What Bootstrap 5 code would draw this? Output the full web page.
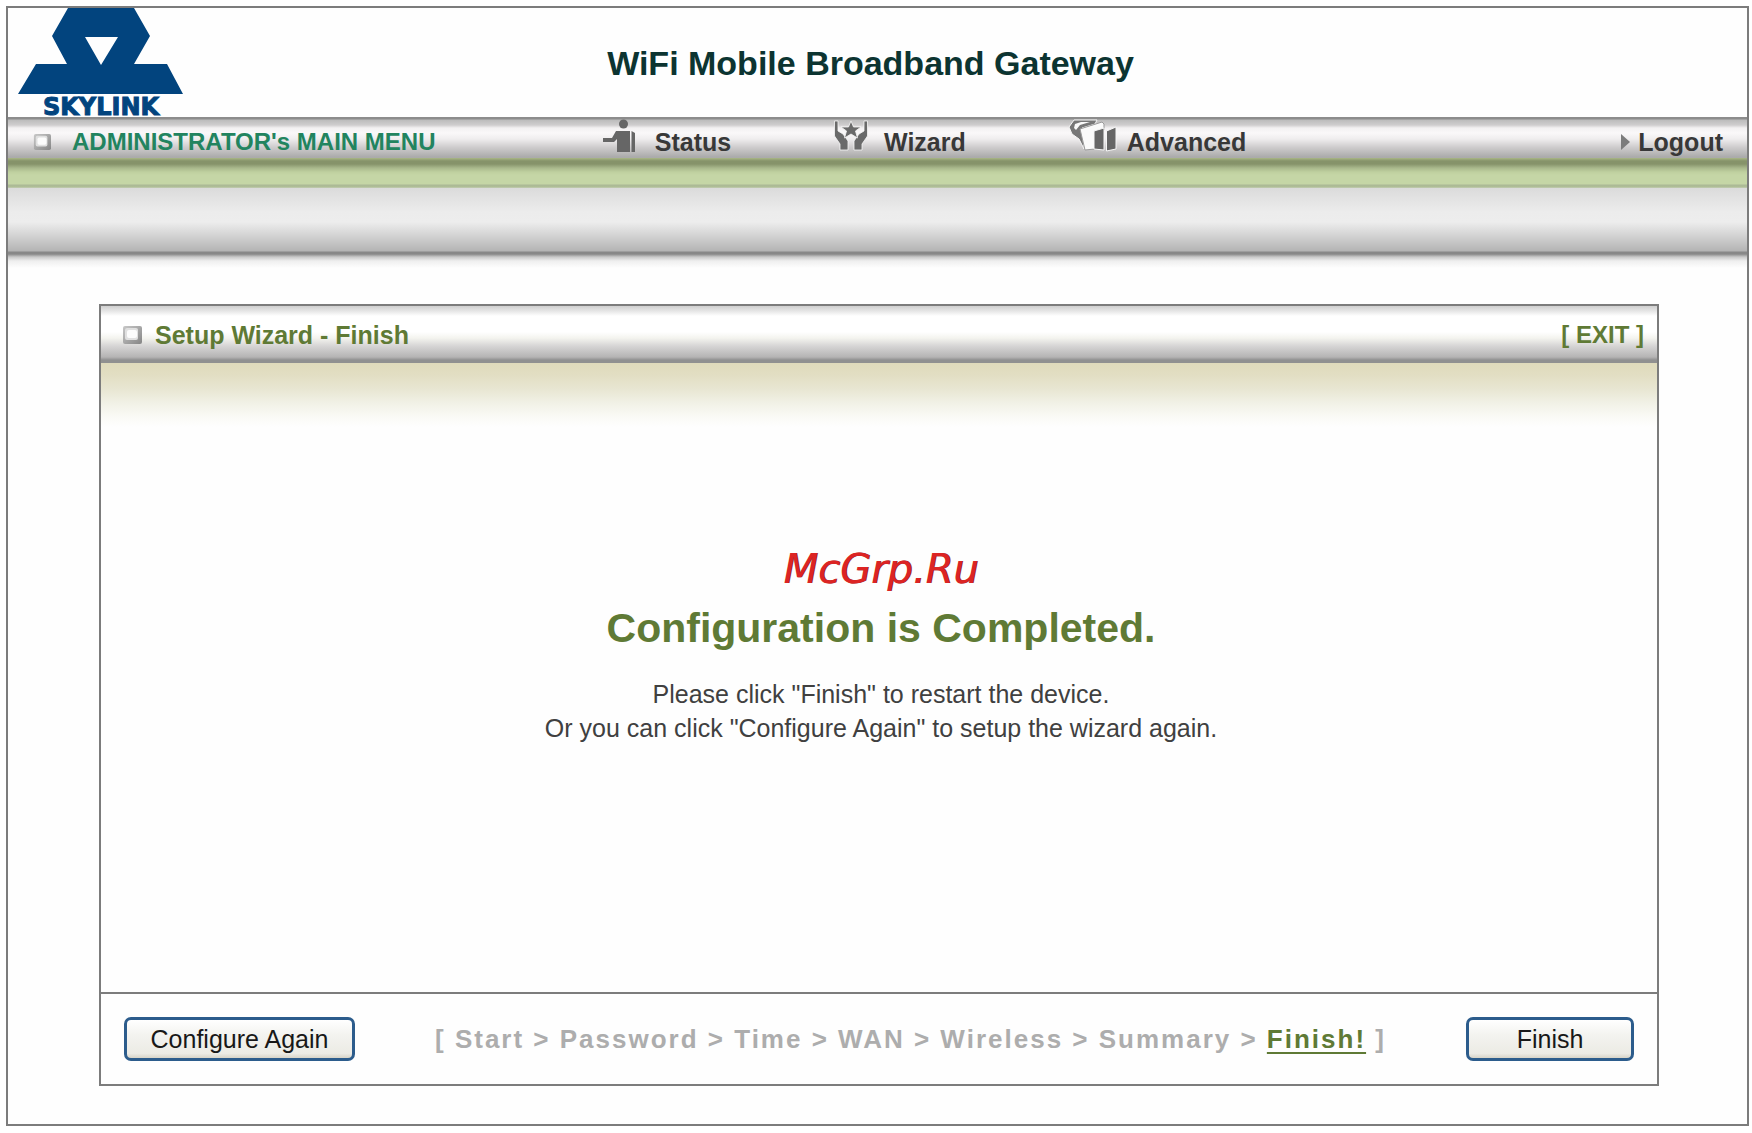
<!DOCTYPE html>
<html lang="en">
<head>
<meta charset="utf-8">
<meta name="viewport" content="width=device-width, initial-scale=1">
<title>WiFi Mobile Broadband Gateway</title>
<link href="https://cdn.jsdelivr.net/npm/bootstrap@5.3.0/dist/css/bootstrap.min.css" rel="stylesheet">
<style>
  :root { --line: #7c7c7c; --olive: #5f7a35; }
  body { font-family: "Liberation Sans", Arial, sans-serif; font-size: 25px; line-height: 34px; color: #404040; background: #fff; padding: 6px 3px 7px 6px; }
  a { text-decoration: none; color: inherit; }
  .frame { border: 2px solid var(--line); min-height: calc(100vh - 13px); background: #fefefe; }
  .masthead { height: 109px; }
  .masthead .side { flex: 1 1 0; }
  .masthead h1 { font-size: 34px; line-height: 40px; color: #0c3431; padding-right: 14px; }
  .wordmark { font: bold 24px "DejaVu Sans", sans-serif; }
  .menu-bar {
    display: grid; grid-template-columns: 342fr 133fr 135fr 390fr; align-items: center;
    height: 41px; padding-top: 2px; font-weight: bold; color: #383838;
    background: linear-gradient(#8c8c8c 0, #8c8c8c 2px, #bcbcbc 3px, #cfcdce 8px, #f3f1f2 11px, #faf8f9 16px, #efedee 22px, #cfcdce 30px, #ababab 40px);
  }
  .menu-title { color: #22845f; font-size: 24px; padding-left: 24px; }
  .menu-title svg { margin-right: 20px; }
  .menu-icon { margin-bottom: 12px; }
  .stripe-green { height: 30px; background: linear-gradient(#a9b786 0, #86936a 3px, #86936a 6px, #a9b88c 10px, #bfd09f 14px, #c5d6a6 17px, #c5d6a6 26px, #abb896 27px, #b0bf97 29px, #c8cfbc 30px); }
  .stripe-gray { height: 80px; background: linear-gradient(#dbdbdb 0, #ececec 24px, #ededed 34px, #d6d6d6 46px, #b4b4b4 63px, #888 64px, #888 66px, #c9c9c9 69px, #efefef 73px, #fefefe 80px); }
  .panel { border: 2px solid var(--line); margin: 36px 88px 38px 91px; }
  .panel-head {
    height: 57px; padding: 0 13px 0 21px; color: var(--olive); font-weight: bold;
    background: linear-gradient(#cfcfcf 0, #e6e6e6 5px, #fff 10px, #fff 26px, #f4f4ef 32px, #d6d5d5 40px, #b5b4b4 51px, #909090 54px, #909090 57px);
  }
  .panel-head h2 { font-size: 25px; line-height: 34px; }
  .panel-head svg { margin-right: 13px; }
  .exit-link { font-size: 24px; }
  .panel-main { padding: 0 0 66px 4px; background: linear-gradient(#dfdabb 0, #e2dec3 12px, #e8e6d2 26px, #f1f1e6 40px, #fafaf6 54px, #fefefe 64px); }
  .brand-note { font: italic 40px/48px "DejaVu Sans", sans-serif; color: #dc2424; text-shadow: 1px 0 0 #8c1c1c; }
  .done { font-size: 41px; line-height: 50px; margin: 10px 0 24px; color: var(--olive); }
  .panel-foot { height: 92px; padding: 0 23px; border-top: 2px solid var(--line); }
  .steps { font-size: 26px; letter-spacing: 2px; font-weight: bold; color: #adadad; }
  .steps a { color: var(--olive); text-decoration: underline; text-decoration-thickness: 2px; text-underline-offset: 4px; }
  .xp {
    height: 44px; padding: 0 22px; font-size: 25px; line-height: 34px; color: #181818;
    border: 3px solid #2c5c8c; border-radius: 7px;
    background: linear-gradient(#fff, #f3f3ef 40%, #ecebe5 88%, #d8d4c8);
  }
  .xp:hover { color: #000; border-color: #2c5c8c; }
  .xp-again { min-width: 231px; }
  .xp-finish { min-width: 168px; }
</style>
<script src="https://cdn.jsdelivr.net/npm/bootstrap@5.3.0/dist/js/bootstrap.bundle.min.js"></script>
</head>
<body>
<svg width="0" height="0" class="position-absolute" aria-hidden="true">
  <defs>
    <linearGradient id="bevel" x1="0" y1="0" x2="1" y2="1"><stop offset="0" stop-color="#c8c8c8"/><stop offset="1" stop-color="#858585"/></linearGradient>
    <symbol id="bullet" viewBox="0 0 20 20">
      <rect x="1" y="1" width="19" height="18" rx="2" fill="url(#bevel)"/>
      <rect x="3" y="3" width="13" height="12" rx="2" fill="#e0e0e0"/>
      <rect x="5" y="5" width="10" height="8" rx="2" fill="#fcfcfc"/>
    </symbol>
  </defs>
</svg>

<div class="frame d-flex flex-column">
  <header class="masthead d-flex align-items-center">
    <div class="side align-self-start">
      <svg class="d-block overflow-visible" width="190" height="109" viewBox="0 0 190 109" role="img" aria-label="Skylink">
        <path fill="#02447e" fill-rule="evenodd" d="M60 0H126L142 28L126 56H159L175 86H10L28 56H59L44 28ZM77 29L93 57L110 29Z"/>
        <text class="wordmark" x="93" y="107" text-anchor="middle" fill="#02447e" stroke="#02447e">SKYLINK</text>
      </svg>
    </div>
    <h1 class="fw-bold text-nowrap mb-0">WiFi Mobile Broadband Gateway</h1>
    <div class="side"></div>
  </header>

  <nav class="menu-bar text-nowrap">
    <div class="menu-title d-flex align-items-center"><svg width="20" height="18"><use href="#bullet"/></svg>ADMINISTRATOR's MAIN MENU</div>
    <a href="#" class="d-flex align-items-center">
      <svg class="menu-icon" width="32" height="34" viewBox="0 0 32 34"><g fill="#666"><circle cx="20.500" cy="5" r="4.500"/><path d="M0 19H9L13 12H27V33H14V20L11 23H0Z"/><path d="M28.500 12L32 14V33H28.500Z"/></g></svg>
      <span class="ps-3 ms-1">Status</span></a>
    <a href="#" class="d-flex align-items-center">
      <svg class="menu-icon" width="34" height="34" viewBox="0 0 34 34"><g fill="#6a6a6a" stroke="#f6f6f6" stroke-width=".8"><path d="M0.500 2H4V12L9 15L14 22V31H6V25L0.500 17Z"/><path d="M33.500 2H30V12L25 15L20 22V31H28V25L33.500 17Z"/><path d="M17 2L19.500 8H27L21.500 12L23.500 19L17 15L10.500 19L12.500 12L7 8H14.500Z"/></g></svg>
      <span class="ps-3">Wizard</span></a>
    <div class="d-flex align-items-center justify-content-between">
      <a href="#" class="d-flex align-items-center">
        <svg class="menu-icon" width="50" height="34" viewBox="0 0 50 34"><path fill="#777" stroke="#f6f6f6" d="M5 1H28L26 5L13 9L15 30L10 20L3 15L0 8Z"/><path fill="#fafafa" d="M6 5L12 3H21L11 6L7 11L5 9Z"/><path fill="#fafafa" stroke="#999" d="M11 10L33 3L35 5V11L26 12V30L16 31Z"/><path fill="#666" stroke="#f6f6f6" d="M25 12L35 9V31L25 30Z"/><path fill="#666" stroke="#f6f6f6" d="M37.500 12L47 8V30L37.500 32Z"/></svg>
        <span class="ps-2">Advanced</span></a>
      <a href="#" class="d-flex align-items-center pe-4">
        <svg width="9" height="16" viewBox="0 0 9 16"><path fill="#7c7c7c" d="M0 0L9 8L0 16Z"/></svg>
        <span class="ps-2">Logout</span></a>
    </div>
  </nav>
  <div class="stripe-green"></div>
  <div class="stripe-gray"></div>

  <main class="panel d-flex flex-column flex-grow-1">
    <div class="panel-head d-flex align-items-center justify-content-between">
      <h2 class="fw-bold mb-0 d-flex align-items-center"><svg width="20" height="20"><use href="#bullet"/></svg>Setup Wizard - Finish</h2>
      <a href="#" class="exit-link">[ EXIT ]</a>
    </div>
    <div class="panel-main flex-grow-1 d-flex flex-column justify-content-center text-center">
      <div class="brand-note">McGrp.Ru</div>
      <h3 class="done fw-bold">Configuration is Completed.</h3>
      <p class="mb-0">Please click "Finish" to restart the device.<br>Or you can click "Configure Again" to setup the wizard again.</p>
    </div>
    <div class="panel-foot d-flex align-items-center justify-content-between">
      <button type="button" class="btn xp xp-again">Configure Again</button>
      <div class="steps text-nowrap">[ Start &gt; Password &gt; Time &gt; WAN &gt; Wireless &gt; Summary &gt; <a href="#">Finish!</a> ]</div>
      <button type="button" class="btn xp xp-finish">Finish</button>
    </div>
  </main>
</div>
</body>
</html>
